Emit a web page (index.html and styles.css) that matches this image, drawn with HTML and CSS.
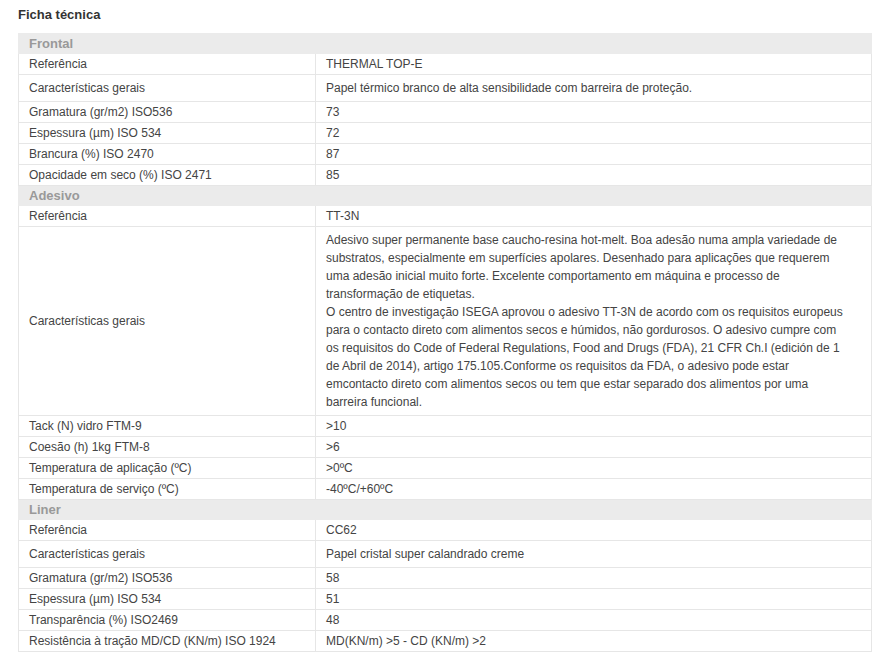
FILE: index.html
```html
<!DOCTYPE html>
<html lang="pt">
<head>
<meta charset="UTF-8">
<meta name="viewport" content="width=device-width, initial-scale=1.0">
<title>Ficha técnica</title>
<link rel="stylesheet" href="styles.css">
</head>
<body>
<div class="sheet">
    <h2 class="sheet-title">Ficha técnica</h2>
    <table class="specs">
        <tr class="group"><th colspan="2">Frontal</th></tr>
        <tr><td class="label">Referência</td><td>THERMAL TOP-E</td></tr>
        <tr class="tall"><td class="label">Características gerais</td><td>Papel térmico branco de alta sensibilidade com barreira de proteção.</td></tr>
        <tr><td class="label">Gramatura (gr/m2) ISO536</td><td>73</td></tr>
        <tr><td class="label">Espessura (µm) ISO 534</td><td>72</td></tr>
        <tr><td class="label">Brancura (%) ISO 2470</td><td>87</td></tr>
        <tr><td class="label">Opacidade em seco (%) ISO 2471</td><td>85</td></tr>

        <tr class="group"><th colspan="2">Adesivo</th></tr>
        <tr><td class="label">Referência</td><td>TT-3N</td></tr>
        <tr class="tall"><td class="label">Características gerais</td><td>Adesivo super permanente base caucho-resina hot-melt. Boa adesão numa ampla variedade de<br>substratos, especialmente em superfícies apolares. Desenhado para aplicações que requerem<br>uma adesão inicial muito forte. Excelente comportamento em máquina e processo de<br>transformação de etiquetas.<br>O centro de investigação ISEGA aprovou o adesivo TT-3N de acordo com os requisitos europeus<br>para o contacto direto com alimentos secos e húmidos, não gordurosos. O adesivo cumpre com<br>os requisitos do Code of Federal Regulations, Food and Drugs (FDA), 21 CFR Ch.I (edición de 1<br>de Abril de 2014), artigo 175.105.Conforme os requisitos da FDA, o adesivo pode estar<br>emcontacto direto com alimentos secos ou tem que estar separado dos alimentos por uma<br>barreira funcional.</td></tr>
        <tr><td class="label">Tack (N) vidro FTM-9</td><td>&gt;10</td></tr>
        <tr><td class="label">Coesão (h) 1kg FTM-8</td><td>&gt;6</td></tr>
        <tr><td class="label">Temperatura de aplicação (ºC)</td><td>&gt;0ºC</td></tr>
        <tr><td class="label">Temperatura de serviço (ºC)</td><td>-40ºC/+60ºC</td></tr>

        <tr class="group"><th colspan="2">Liner</th></tr>
        <tr><td class="label">Referência</td><td>CC62</td></tr>
        <tr class="tall"><td class="label">Características gerais</td><td>Papel cristal super calandrado creme</td></tr>
        <tr><td class="label">Gramatura (gr/m2) ISO536</td><td>58</td></tr>
        <tr><td class="label">Espessura (µm) ISO 534</td><td>51</td></tr>
        <tr><td class="label">Transparência (%) ISO2469</td><td>48</td></tr>
        <tr><td class="label">Resistência à tração MD/CD (KN/m) ISO 1924</td><td>MD(KN/m) &gt;5 - CD (KN/m) &gt;2</td></tr>
    </table>
</div>
</body>
</html>
```

FILE: styles.css
```css
body {
    margin: 0;
    background-color: #fff;
    font-family: "Liberation Sans", Arial, sans-serif;
    color: #444;
}

.sheet {
    padding: 7px 18px 0 18px;
}

.sheet-title {
    margin: 0 0 10px 0;
    font-size: 13px;
    line-height: 16px;
    font-weight: bold;
    color: #333;
}

.specs {
    width: 854px;
    border-collapse: collapse;
    font-size: 12px;
}

.specs td {
    padding: 2px 10px;
    line-height: 16px;
    border: 1px solid #e6e6e6;
    vertical-align: middle;
    text-align: left;
}

.specs td.label {
    width: 276px;
}

.specs .tall td {
    padding: 4px 10px;
    line-height: 18px;
}

.specs .group th {
    padding: 0 10px;
    height: 19px;
    line-height: 19px;
    font-size: 13px;
    font-weight: bold;
    color: #999;
    background-color: #ebebeb;
    border: 1px solid #ebebeb;
    text-align: left;
}
```
